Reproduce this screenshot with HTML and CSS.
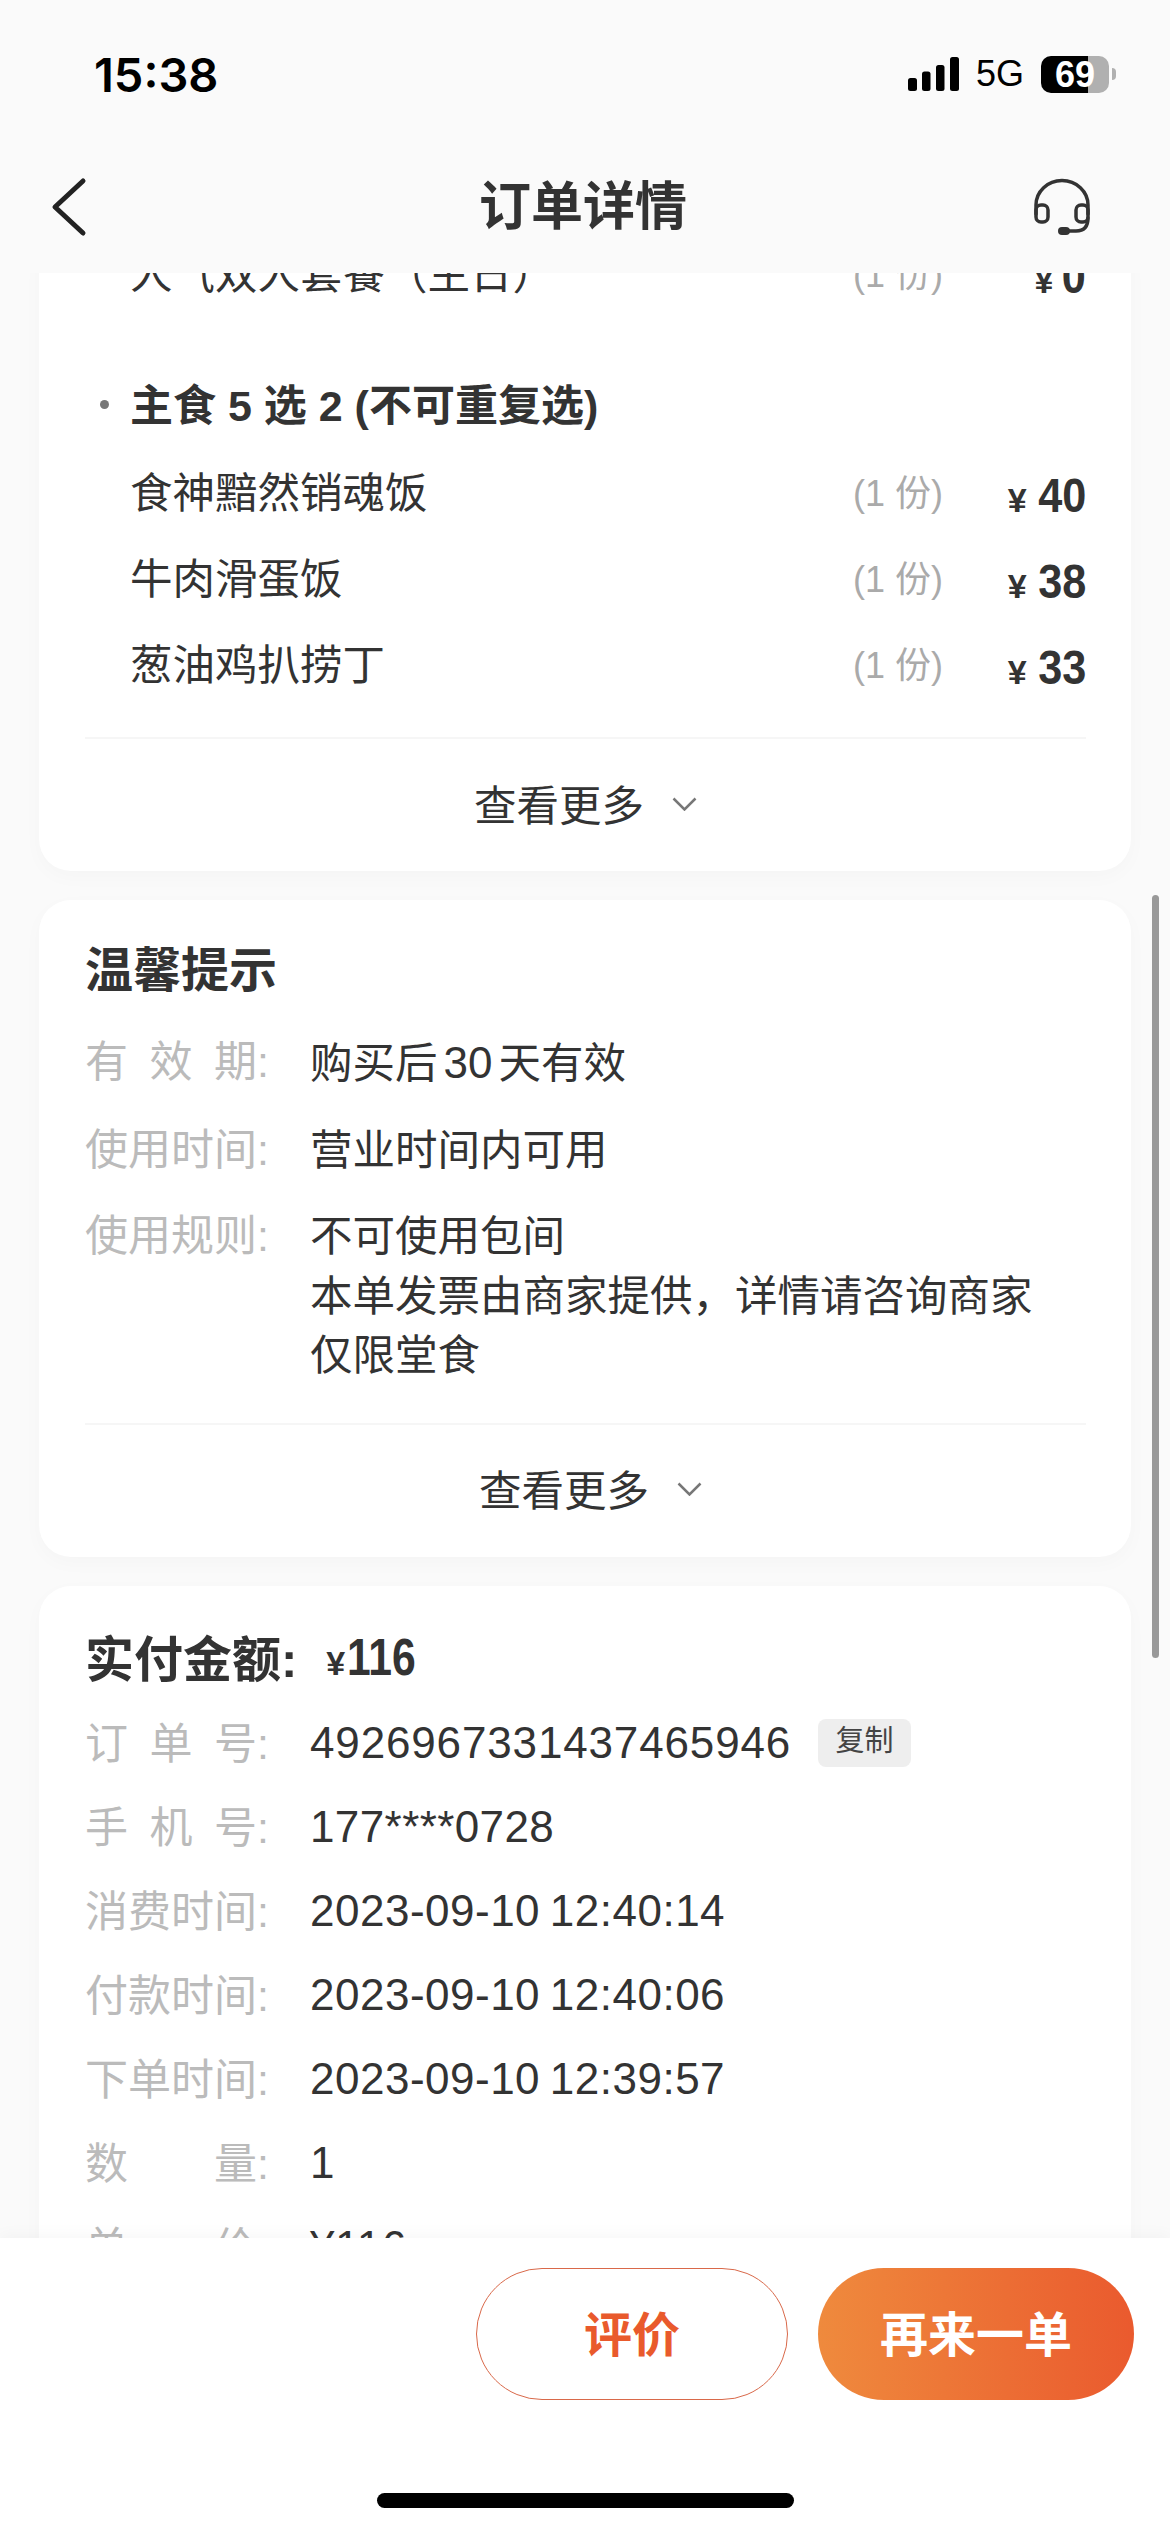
FILE: index.html
```html
<!DOCTYPE html>
<html lang="zh-CN">
<head>
<meta charset="utf-8">
<title>订单详情</title>
<link rel="stylesheet" href="styles.css">
</head>
<body>
<div class="screen">
  <header class="status">
    <span class="time">15:38</span>
    <div class="status-right">
      <svg class="signal" viewBox="0 0 51 34" width="51" height="34"><rect x="0" y="21" width="9" height="13" rx="2.5"/><rect x="14" y="14.5" width="8.5" height="19.5" rx="2.5"/><rect x="28" y="8" width="8.5" height="26" rx="2.5"/><rect x="42" y="0" width="9" height="34" rx="2.5"/></svg>
      <span class="net">5G</span>
      <span class="battery">69</span>
    </div>
  </header>
  <nav class="nav">
    <svg class="back" viewBox="0 0 36 60" width="36" height="60"><path d="M32 4 L4 30 L32 56" /></svg>
    <h1 class="title">订单详情</h1>
    <svg class="headset" viewBox="0 0 58 58" width="58" height="58"><path d="M3 36 V27 A26 24.500 0 0 1 55 27 V36"/><rect x="3" y="27" width="12" height="17" rx="5"/><rect x="43" y="27" width="12" height="17" rx="5"/><path d="M55 40 C55 50 50 53 43 53 H31"/><path class="mic" d="M29 53 H33"/></svg>
  </nav>

  <main class="main">
    <div class="scroll">
      <section class="card">
        <div class="item"><span class="name">人气双人套餐（主日）</span><span class="qty">(1 份)</span><span class="price"><i>¥</i><b>0</b></span></div>
        <div class="group"><span class="dot"></span>主食 5 选 2 (不可重复选)</div>
        <div class="item"><span class="name">食神黯然销魂饭</span><span class="qty">(1 份)</span><span class="price"><i>¥</i><b>40</b></span></div>
        <div class="item"><span class="name">牛肉滑蛋饭</span><span class="qty">(1 份)</span><span class="price"><i>¥</i><b>38</b></span></div>
        <div class="item"><span class="name">葱油鸡扒捞丁</span><span class="qty">(1 份)</span><span class="price"><i>¥</i><b>33</b></span></div>
        <div class="more more-first">
          <span>查看更多</span>
          <svg class="chev" viewBox="0 0 25 14" width="25" height="14"><path d="M1.500 1.500 L12.500 12.500 L23.500 1.500"/></svg>
        </div>
      </section>

      <section class="card card-tips">
        <h2 class="card-title">温馨提示</h2>
        <div class="tip"><span class="label spread"><span>有</span><span>效</span><span>期:</span></span><div class="value">购买后<span class="num">30</span>天有效</div></div>
        <div class="tip"><span class="label">使用时间:</span><div class="value">营业时间内可用</div></div>
        <div class="tip"><span class="label">使用规则:</span><div class="value">不可使用包间<br>本单发票由商家提供，详情请咨询商家<br>仅限堂食</div></div>
        <div class="more more-tips">
          <span>查看更多</span>
          <svg class="chev" viewBox="0 0 25 14" width="25" height="14"><path d="M1.500 1.500 L12.500 12.500 L23.500 1.500"/></svg>
        </div>
      </section>

      <section class="card card-info">
        <h2 class="card-title paid">实付金额: <span class="price paid-price"><i>¥</i><b>116</b></span></h2>
        <div class="row"><span class="label spread"><span>订</span><span>单</span><span>号:</span></span><span class="value value-id">4926967331437465946</span><span class="copy">复制</span></div>
        <div class="row"><span class="label spread"><span>手</span><span>机</span><span>号:</span></span><span class="value value-phone">177****0728</span></div>
        <div class="row"><span class="label">消费时间:</span><span class="value">2023-09-10 12:40:14</span></div>
        <div class="row"><span class="label">付款时间:</span><span class="value">2023-09-10 12:40:06</span></div>
        <div class="row"><span class="label">下单时间:</span><span class="value">2023-09-10 12:39:57</span></div>
        <div class="row"><span class="label spread"><span>数</span><span>量:</span></span><span class="value">1</span></div>
        <div class="row"><span class="label spread"><span>单</span><span>价:</span></span><span class="value">¥116</span></div>
      </section>
    </div>
    <div class="scrollbar"></div>
  </main>

  <footer class="footer">
    <div class="actions">
      <button class="btn btn-outline">评价</button>
      <button class="btn btn-fill">再来一单</button>
    </div>
    <div class="home"></div>
  </footer>
</div>
</body>
</html>
```
FILE: styles.css
```css
* { box-sizing: border-box; }
html, body { margin: 0; padding: 0; }
body {
  font-family: "Liberation Sans", "Noto Sans CJK SC", sans-serif;
  color: #333;
  background: #fafafa;
}
.screen {
  width: 1170px;
  height: 2532px;
  display: flex;
  flex-direction: column;
  overflow: hidden;
  background: #fafafa;
}

/* status bar */
.status {
  flex: none;
  height: 148px;
  padding: 0 61px 0 94px;
  display: flex;
  align-items: center;
  justify-content: space-between;
  color: #000;
}
.time { font-family: Inter, "Liberation Sans", sans-serif; font-size: 47px; font-weight: 600; }
.status-right { display: flex; align-items: center; }
.signal { fill: #000; display: block; }
.net { font-family: "Liberation Sans", sans-serif; font-size: 36px; margin-left: 17px; }
.battery {
  position: relative;
  margin-left: 17px;
  width: 68px;
  height: 37px;
  border-radius: 10px;
  background: linear-gradient(90deg, #000 69%, #b0b0b0 69%);
  color: #fff;
  font: 700 36px/37px "Liberation Sans", sans-serif;
  text-align: center;
}
.battery::after {
  content: "";
  position: absolute;
  left: 71px;
  top: 12px;
  width: 4px;
  height: 12px;
  border-radius: 0 6px 6px 0;
  background: #b0b0b0;
}

/* nav */
.nav {
  flex: none;
  height: 125px;
  padding: 0 79px 7px 51px;
  display: grid;
  grid-template-columns: 1fr auto 1fr;
  align-items: center;
}
.back { fill: none; stroke: #222; stroke-width: 5; stroke-linecap: round; stroke-linejoin: round; display: block; }
.title { margin: 0 0 0 24px; font-size: 52px; font-weight: 700; color: #333; line-height: 60px; }
.headset { fill: none; stroke: #333; stroke-width: 3.500; stroke-linecap: round; display: block; justify-self: end; }
.headset .mic { stroke-width: 8; }

/* scrolled content */
.main { flex: 1; min-height: 0; overflow: hidden; position: relative; }
.scroll {
  margin-top: -42px;
  padding: 0 39px;
  display: flex;
  flex-direction: column;
  gap: 29px;
}
.card {
  background: #fff;
  border-radius: 32px;
  box-shadow: 0 6px 20px rgba(0, 0, 0, .025);
  padding: 0 45px 0 46px;
}
.item {
  height: 86px;
  padding: 0 0 8px 45px;
  display: flex;
  align-items: center;
  font-size: 42.500px;
}
.name { flex: 1; }
.qty { flex: none; width: 90px; font-size: 36px; color: #aaa; white-space: nowrap; text-align: right; margin-top: 2px; }
.price { flex: none; width: 143px; text-align: right; font-weight: 700; color: #333; }
.item .price { margin-top: 12px; }
.price i { font-style: normal; font-size: 34px; margin-right: 6px; }
.price b {
  display: inline-block;
  font-size: 48px;
  transform: scaleX(.9);
  transform-origin: right center;
}
.group {
  position: relative;
  height: 86px;
  margin-top: 47px;
  padding: 0 0 10px 45px;
  display: flex;
  align-items: center;
  font-size: 43px;
  font-weight: 700;
}
.dot {
  position: absolute;
  left: 15px;
  top: 36px;
  width: 9px;
  height: 9px;
  border-radius: 50%;
  background: #777;
}
.more {
  border-top: 2px solid #f6f6f6;
  display: flex;
  align-items: center;
  justify-content: center;
  gap: 28px;
  font-size: 42.500px;
  padding-bottom: 6px;
}
.more-first { height: 134px; margin-top: 29px; }
.more-tips { height: 133px; margin-top: 37px; padding-left: 10px; }
.chev { fill: none; stroke: #777; stroke-width: 2.500; display: block; margin-top: 4px; }

.card-title { margin: 0; padding-top: 40px; font-size: 48px; font-weight: 700; line-height: 62px; color: #333; }
.card-tips { height: 657px; }
.card-tips .card-title { margin-bottom: 31px; }
.tip { display: flex; margin-bottom: 27px; font-size: 42.500px; line-height: 59.500px; }
.label {
  flex: none;
  width: 184px;
  margin-right: 41px;
  color: #bbb;
  font-size: 43px;
}
.spread { display: flex; justify-content: space-between; }
.value { color: #333; }
.num { font-size: 44px; padding: 0 6px; }

.card-info { padding-bottom: 40px; }
.paid { margin-bottom: 7px; display: flex; align-items: center; font-size: 49px; }
.paid-price { width: auto; margin-left: 29px; }
.paid-price i { margin-right: 2px; }
.paid-price b { font-size: 52px; transform: scaleX(.82); transform-origin: left center; }
.row { height: 84px; display: flex; align-items: center; font-size: 44px; }
.row .label { padding-bottom: 6px; }
.row .value { letter-spacing: .500px; word-spacing: -3px; }
.row .value-id { letter-spacing: .850px; }
.row .value-phone { letter-spacing: .400px; }
.copy {
  margin-left: 27px;
  width: 93px;
  height: 48px;
  border-radius: 8px;
  background: #eee;
  font-size: 29px;
  line-height: 44px;
  text-align: center;
  color: #444;
}
.scrollbar {
  position: absolute;
  right: 11px;
  top: 622px;
  width: 7px;
  height: 763px;
  border-radius: 4px;
  background: #999;
}

/* footer */
.footer {
  flex: none;
  height: 294px;
  background: #fff;
  box-shadow: 0 -4px 14px rgba(0, 0, 0, .03);
  position: relative;
  padding: 30px 36px 0 0;
  display: flex;
  flex-direction: column;
  align-items: flex-end;
}
.actions { display: flex; gap: 30px; }
.btn {
  height: 132px;
  border-radius: 66px;
  font-family: inherit;
  font-size: 48px;
  font-weight: 700;
  padding: 0 0 6px;
}
.btn-outline { width: 312px; background: #fff; color: #e95a2c; border: 1.500px solid #d9694a; }
.btn-fill { width: 316px; border: 0; color: #fff; background: linear-gradient(90deg, #ef8a3d, #ea5a2e); }
.home {
  align-self: center;
  margin: 93px 0 0 36px;
  width: 417px;
  height: 15px;
  border-radius: 8px;
  background: #000;
}
```
